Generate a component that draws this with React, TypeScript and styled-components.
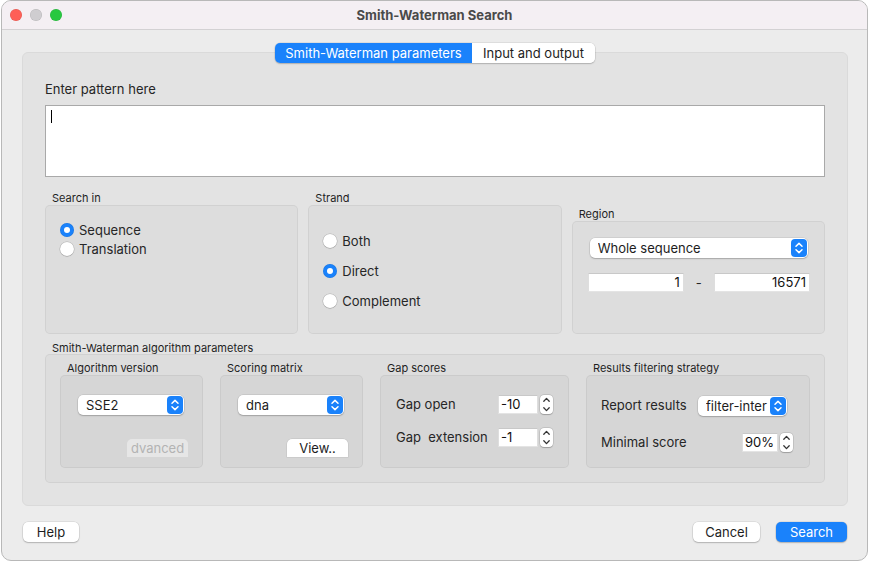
import React from "react";
import styled, { createGlobalStyle } from "styled-components";

const Global = createGlobalStyle`
  html, body { margin: 0; padding: 0; background: #ffffff; }
  body {
    font-family: Inter, "Liberation Sans", sans-serif;
    font-size: 13px;
    color: #262626;
    -webkit-font-smoothing: antialiased;
  }
  * { box-sizing: border-box; }
`;

const BLUE = "#1a82fb";

const Window = styled.div`
  margin-left: 1px;
  width: 867px;
  height: 561px;
  background: #ececec;
  border: 1px solid #b8b8b8;
  border-radius: 10px;
  overflow: hidden;
  display: flex;
  flex-direction: column;
`;

const TitleBar = styled.div`
  height: 29px;
  flex: none;
  background: #f4eff3;
  border-bottom: 1px solid #d3d1d3;
  display: grid;
  grid-template-columns: 1fr auto 1fr;
  align-items: center;
`;

const Lights = styled.div`
  display: flex;
  gap: 8px;
  padding-left: 8px;
`;

const Light = styled.span<{ $color: string }>`
  width: 12px;
  height: 12px;
  border-radius: 50%;
  background: ${(p) => p.$color};
  box-shadow: inset 0 0 0 0.5px rgba(0, 0, 0, 0.12);
`;

const Title = styled.div`
  font-weight: 700;
  font-size: 13px;
  color: #4a4a4a;
`;

const Body = styled.div`
  flex: 1;
  display: flex;
  flex-direction: column;
  padding: 13px 19px 0 20px;
`;

const TabBar = styled.div`
  display: flex;
  justify-content: center;
  position: relative;
  z-index: 1;
`;

const Segments = styled.div`
  display: flex;
  border-radius: 5px;
  overflow: hidden;
  box-shadow: 0 0 0 0.5px rgba(0, 0, 0, 0.12), 0 1px 1.5px rgba(0, 0, 0, 0.18);
`;

const Tab = styled.div<{ $active?: boolean; $w: number }>`
  width: ${(p) => p.$w}px;
  height: 20px;
  display: flex;
  align-items: center;
  justify-content: center;
  font-size: 13px;
  background: ${(p) => (p.$active ? BLUE : "#ffffff")};
  color: ${(p) => (p.$active ? "#ffffff" : "#1d1d1d")};
`;

const Panel = styled.div`
  margin-top: -11px;
  height: 454px;
  background: #e3e3e3;
  border: 1px solid #dadada;
  border-radius: 6px;
  padding: 28px 22px 22px 22px;
  display: flex;
  flex-direction: column;
`;

const FieldLabel = styled.div`
  font-size: 13px;
  line-height: 16px;
  margin-bottom: 8px;
`;

const PatternArea = styled.div`
  height: 72px;
  background: #ffffff;
  border: 1px solid #a9a9a9;
  padding: 4px 5px;
`;

const Caret = styled.span`
  display: block;
  width: 1px;
  height: 13px;
  background: #000;
`;

const GroupRow = styled.div`
  margin-top: 15px;
  display: grid;
  grid-template-columns: repeat(3, 1fr);
  column-gap: 10px;
  align-items: end;
`;

const Group = styled.div<{ $mt?: number }>`
  display: flex;
  flex-direction: column;
  margin-top: ${(p) => p.$mt ?? 0}px;
`;

const GroupTitle = styled.div<{ $lh?: number }>`
  font-size: 11px;
  line-height: ${(p) => p.$lh ?? 13}px;
  padding-left: 7px;
  color: #1f1f1f;
  white-space: nowrap;
`;

const GroupBox = styled.div<{ $h: number; $tone?: string; $pad?: string }>`
  height: ${(p) => p.$h}px;
  background: ${(p) => p.$tone ?? "#dddddd"};
  border: 1px solid rgba(0, 0, 0, 0.05);
  border-radius: 5px;
  padding: ${(p) => p.$pad ?? "0"};
`;

const RadioList = styled.div<{ $row: number }>`
  display: flex;
  flex-direction: column;
  & > * { height: ${(p) => p.$row}px; }
`;

const RadioRow = styled.label`
  display: flex;
  align-items: center;
  gap: 5px;
  font-size: 13px;
  color: #262626;
`;

const Radio = styled.span<{ $checked?: boolean }>`
  width: 14px;
  height: 14px;
  border-radius: 50%;
  flex: none;
  display: flex;
  align-items: center;
  justify-content: center;
  background: ${(p) => (p.$checked ? BLUE : "#ffffff")};
  box-shadow: ${(p) =>
    p.$checked
      ? "inset 0 0 0 0.5px rgba(0,0,0,0.1)"
      : "0 0 0 0.5px rgba(0,0,0,0.18), 0 0.5px 1px rgba(0,0,0,0.2)"};
  &::after {
    content: "";
    display: ${(p) => (p.$checked ? "block" : "none")};
    width: 6px;
    height: 6px;
    border-radius: 50%;
    background: #ffffff;
  }
`;

const PopUp = styled.div<{ $w?: number; $mx?: number }>`
  width: ${(p) => (p.$w ? `${p.$w}px` : "auto")};
  margin: 0 ${(p) => p.$mx ?? 0}px;
  height: 20px;
  flex: none;
  background: #ffffff;
  border-radius: 5px;
  box-shadow: 0 0 0 0.5px rgba(0, 0, 0, 0.12), 0 1px 1.5px rgba(0, 0, 0, 0.2);
  display: flex;
  align-items: center;
  padding: 0 1px 0 8px;
  overflow: hidden;
`;

const PopUpText = styled.span`
  flex: 1;
  min-width: 0;
  white-space: nowrap;
  overflow: hidden;
  font-size: 13px;
  color: #1d1d1d;
`;

const BlueStepper = styled.span`
  width: 16px;
  height: 18px;
  border-radius: 4px;
  background: ${BLUE};
  flex: none;
  display: flex;
  align-items: center;
  justify-content: center;
`;

const FieldsRow = styled.div`
  margin-top: 15px;
  display: grid;
  grid-template-columns: 1fr auto 1fr;
  column-gap: 12px;
  align-items: center;
`;

const NumberField = styled.div<{ $w?: number; $right?: boolean }>`
  width: ${(p) => (p.$w ? `${p.$w}px` : "auto")};
  height: 19px;
  background: #ffffff;
  border-top: 1px solid #c8c8c8;
  border-left: 1px solid #dedede;
  border-right: 1px solid #dedede;
  border-bottom: 1px solid #e4e4e4;
  font-size: 13px;
  line-height: 17px;
  padding: 0 ${(p) => (p.$right ? "3px" : "2px")};
  text-align: ${(p) => (p.$right ? "right" : "left")};
  color: #111;
`;

const Dash = styled.span`
  font-size: 13px;
  color: #262626;
`;

const ParamsGrid = styled.div`
  display: grid;
  grid-template-columns: 143px 143px 189px 224px;
  column-gap: 17px;
`;

const InnerStack = styled.div`
  display: flex;
  flex-direction: column;
  align-items: flex-start;
  height: 100%;
`;

const InnerButtonRow = styled.div`
  align-self: stretch;
  display: flex;
  justify-content: flex-end;
  margin-top: 24px;
`;

const SmallButton = styled.div<{ $disabled?: boolean }>`
  width: 61px;
  height: 18px;
  border-radius: 5px 5px 0 0;
  background: ${(p) => (p.$disabled ? "#e6e6e6" : "#ffffff")};
  color: ${(p) => (p.$disabled ? "#b3b3b3" : "#1d1d1d")};
  box-shadow: ${(p) => (p.$disabled ? "none" : "0 0 0 0.5px rgba(0,0,0,0.1)")};
  font-size: 13px;
  display: flex;
  align-items: center;
  justify-content: center;
`;

const SpinGrid = styled.div`
  display: grid;
  grid-template-columns: 1fr 40px 13px;
  column-gap: 2px;
  row-gap: 14px;
  align-items: center;
`;

const SpinLabel = styled.span`
  font-size: 13px;
  white-space: pre;
  color: #262626;
  line-height: 19px;
`;

const SpinStepper = styled.span`
  width: 13px;
  height: 19px;
  border-radius: 4px;
  background: #ffffff;
  box-shadow: 0 0 0 0.5px rgba(0, 0, 0, 0.15), 0 0.5px 1px rgba(0, 0, 0, 0.2);
  display: flex;
  align-items: center;
  justify-content: center;
`;

const ResultRow = styled.div<{ $padRight: number; $mt?: number }>`
  display: flex;
  align-items: center;
  justify-content: space-between;
  height: 19px;
  margin-top: ${(p) => p.$mt ?? 0}px;
  padding-right: ${(p) => p.$padRight}px;
`;

const SpinPair = styled.div`
  display: flex;
  gap: 2px;
  align-items: center;
`;

const ActionRow = styled.div`
  margin-top: 16px;
  padding: 0 1px;
  display: flex;
  align-items: center;
  gap: 16px;
`;

const Spacer = styled.div`
  flex: 1;
`;

const Button = styled.div<{ $primary?: boolean; $w: number }>`
  width: ${(p) => p.$w}px;
  height: 20px;
  border-radius: 5px;
  font-size: 13px;
  display: flex;
  align-items: center;
  justify-content: center;
  background: ${(p) => (p.$primary ? BLUE : "#ffffff")};
  color: ${(p) => (p.$primary ? "#ffffff" : "#1d1d1d")};
  box-shadow: 0 0 0 0.5px rgba(0, 0, 0, 0.12), 0 1px 1.5px rgba(0, 0, 0, 0.2);
`;

const UpDown = () => (
  <svg width="16" height="18" viewBox="0 0 16 18" fill="none">
    <path d="M5 7.2 L8 4.4 L11 7.2" stroke="#fff" strokeWidth="1.5" strokeLinecap="round" strokeLinejoin="round" />
    <path d="M5 10.8 L8 13.6 L11 10.8" stroke="#fff" strokeWidth="1.5" strokeLinecap="round" strokeLinejoin="round" />
  </svg>
);

const SmallUpDown = () => (
  <svg width="13" height="19" viewBox="0 0 13 19" fill="none">
    <path d="M3.8 6.2 L6.5 3.4 L9.2 6.2" stroke="#333" strokeWidth="1.3" strokeLinecap="round" strokeLinejoin="round" />
    <path d="M3.8 12.8 L6.5 15.6 L9.2 12.8" stroke="#333" strokeWidth="1.3" strokeLinecap="round" strokeLinejoin="round" />
  </svg>
);

const Select = ({ text, w, mx }: { text: string; w?: number; mx?: number }) => (
  <PopUp $w={w} $mx={mx}>
    <PopUpText>{text}</PopUpText>
    <BlueStepper>
      <UpDown />
    </BlueStepper>
  </PopUp>
);

const Spin = ({ value, w }: { value: string; w: number }) => (
  <SpinPair>
    <NumberField $w={w}>{value}</NumberField>
    <SpinStepper>
      <SmallUpDown />
    </SpinStepper>
  </SpinPair>
);

export default function App() {
  return (
    <>
      <Global />
      <Window>
        <TitleBar>
          <Lights>
            <Light $color="#fe5f57" />
            <Light $color="#cfcdd0" />
            <Light $color="#28c840" />
          </Lights>
          <Title>Smith-Waterman Search</Title>
          <div />
        </TitleBar>
        <Body>
          <TabBar>
            <Segments>
              <Tab $active $w={197}>Smith-Waterman parameters</Tab>
              <Tab $w={123}>Input and output</Tab>
            </Segments>
          </TabBar>
          <Panel>
            <FieldLabel>Enter pattern here</FieldLabel>
            <PatternArea>
              <Caret />
            </PatternArea>

            <GroupRow>
              <Group>
                <GroupTitle>Search in</GroupTitle>
                <GroupBox $h={129} $pad="14px 14px">
                  <RadioList $row={19}>
                    <RadioRow>
                      <Radio $checked />
                      Sequence
                    </RadioRow>
                    <RadioRow>
                      <Radio />
                      Translation
                    </RadioRow>
                  </RadioList>
                </GroupBox>
              </Group>
              <Group>
                <GroupTitle>Strand</GroupTitle>
                <GroupBox $h={129} $pad="20px 14px">
                  <RadioList $row={30}>
                    <RadioRow>
                      <Radio />
                      Both
                    </RadioRow>
                    <RadioRow>
                      <Radio $checked />
                      Direct
                    </RadioRow>
                    <RadioRow>
                      <Radio />
                      Complement
                    </RadioRow>
                  </RadioList>
                </GroupBox>
              </Group>
              <Group>
                <GroupTitle>Region</GroupTitle>
                <GroupBox $h={113} $pad="16px 14px 0 15px">
                  <Select text="Whole sequence" mx={2} />
                  <FieldsRow>
                    <NumberField $right>1</NumberField>
                    <Dash>-</Dash>
                    <NumberField $right>16571</NumberField>
                  </FieldsRow>
                </GroupBox>
              </Group>
            </GroupRow>

            <Group $mt={8}>
              <GroupTitle $lh={12}>Smith-Waterman algorithm parameters</GroupTitle>
              <GroupBox $h={129} $pad="7px 14px 14px 14px">
                <ParamsGrid>
                  <Group>
                    <GroupTitle>Algorithm version</GroupTitle>
                    <GroupBox $h={93} $tone="#d6d6d6" $pad="19px 14px 0 17px">
                      <InnerStack>
                        <Select text="SSE2" w={106} />
                        <InnerButtonRow>
                          <SmallButton $disabled>dvanced</SmallButton>
                        </InnerButtonRow>
                      </InnerStack>
                    </GroupBox>
                  </Group>
                  <Group>
                    <GroupTitle>Scoring matrix</GroupTitle>
                    <GroupBox $h={93} $tone="#d6d6d6" $pad="19px 14px 0 17px">
                      <InnerStack>
                        <Select text="dna" w={106} />
                        <InnerButtonRow>
                          <SmallButton>View..</SmallButton>
                        </InnerButtonRow>
                      </InnerStack>
                    </GroupBox>
                  </Group>
                  <Group>
                    <GroupTitle>Gap scores</GroupTitle>
                    <GroupBox $h={93} $tone="#d6d6d6" $pad="19px 15px 0 15px">
                      <SpinGrid>
                        <SpinLabel>Gap open</SpinLabel>
                        <NumberField $w={40}>-10</NumberField>
                        <SpinStepper>
                          <SmallUpDown />
                        </SpinStepper>
                        <SpinLabel>Gap  extension</SpinLabel>
                        <NumberField $w={40}>-1</NumberField>
                        <SpinStepper>
                          <SmallUpDown />
                        </SpinStepper>
                      </SpinGrid>
                    </GroupBox>
                  </Group>
                  <Group>
                    <GroupTitle>Results filtering strategy</GroupTitle>
                    <GroupBox $h={93} $tone="#d6d6d6" $pad="20px 0 0 14px">
                      <ResultRow $padRight={22}>
                        <SpinLabel>Report results</SpinLabel>
                        <Select text="filter-inter" w={89} />
                      </ResultRow>
                      <ResultRow $padRight={16} $mt={18}>
                        <SpinLabel>Minimal score</SpinLabel>
                        <Spin value="90%" w={36} />
                      </ResultRow>
                    </GroupBox>
                  </Group>
                </ParamsGrid>
              </GroupBox>
            </Group>
          </Panel>

          <ActionRow>
            <Button $w={56}>Help</Button>
            <Spacer />
            <Button $w={67}>Cancel</Button>
            <Button $primary $w={71}>
              Search
            </Button>
          </ActionRow>
        </Body>
      </Window>
    </>
  );
}
